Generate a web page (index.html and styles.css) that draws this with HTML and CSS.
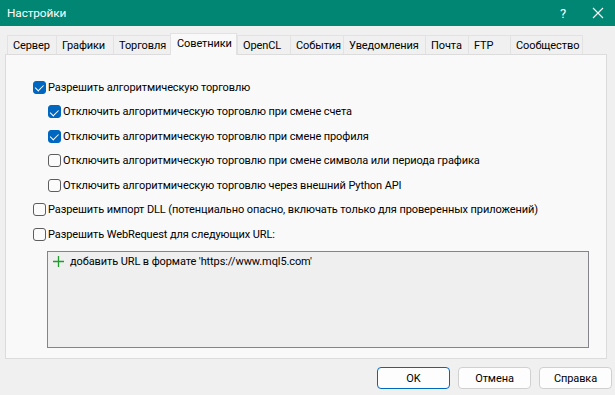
FILE: index.html
```html
<!DOCTYPE html>
<html lang="ru">
<head>
<meta charset="utf-8">
<link rel="stylesheet" href="styles.css">
</head>
<body>
<div class="window">
  <div class="titlebar">
    <span class="title">Настройки</span>
    <span class="help">?</span>
    <svg class="close" width="12" height="12" viewBox="0 0 12 12"><path d="M1 1 L11 11 M11 1 L1 11" stroke="#fff" stroke-width="1.1" fill="none"/></svg>
  </div>
  <div class="tabs">
    <div class="tab w-server">Сервер</div>
    <div class="tab w-charts">Графики</div>
    <div class="tab w-trade">Торговля</div>
    <div class="tab active w-experts">Советники</div>
    <div class="tab w-opencl">OpenCL</div>
    <div class="tab w-events">События</div>
    <div class="tab w-notify">Уведомления</div>
    <div class="tab w-mail">Почта</div>
    <div class="tab w-ftp">FTP</div>
    <div class="tab w-community">Сообщество</div>
  </div>
  <div class="panel">
    <div class="row"><span class="cb checked"></span><span>Разрешить алгоритмическую торговлю</span></div>
    <div class="row sub"><span class="cb checked"></span><span>Отключить алгоритмическую торговлю при смене счета</span></div>
    <div class="row sub"><span class="cb checked"></span><span>Отключить алгоритмическую торговлю при смене профиля</span></div>
    <div class="row sub"><span class="cb"></span><span>Отключить алгоритмическую торговлю при смене символа или периода графика</span></div>
    <div class="row sub"><span class="cb"></span><span>Отключить алгоритмическую торговлю через внешний Python API</span></div>
    <div class="row"><span class="cb"></span><span>Разрешить импорт DLL (потенциально опасно, включать только для проверенных приложений)</span></div>
    <div class="row"><span class="cb"></span><span>Разрешить WebRequest для следующих URL:</span></div>
    <div class="urlbox">
      <div class="urlrow">
        <svg class="plus" width="11" height="11" viewBox="0 0 11 11"><path d="M5.5 0 V11 M0 5.5 H11" stroke="#1f9a2e" stroke-width="1.3" fill="none"/></svg>
        <span>добавить URL в формате 'https://www.mql5.com'</span>
      </div>
    </div>
  </div>
  <div class="buttons">
    <button class="btn primary">OK</button>
    <button class="btn">Отмена</button>
    <button class="btn">Справка</button>
  </div>
</div>
</body>
</html>
```
FILE: styles.css
```css
html, body {
  margin: 0;
  padding: 0;
  background: #f0f0f0;
  font-family: Roboto, "Noto Sans", sans-serif;
  font-size: 11px;
  letter-spacing: -0.1px;
  color: #000;
}
.window {
  width: 615px;
  height: 395px;
  display: flex;
  flex-direction: column;
  overflow: hidden;
}
.titlebar {
  height: 26px;
  background: #008672;
  color: #fff;
  display: flex;
  align-items: center;
  padding-left: 7px;
  font-size: 11.8px;
}
.title { flex: 1; }
.help {
  font-size: 13px;
  margin-right: 26px;
}
.close { margin-right: 11px; }
.tabs {
  display: flex;
  align-items: flex-end;
  margin-top: 7px;
  padding-left: 7px;
  height: 21px;
  position: relative;
  z-index: 1;
}
.tab {
  height: 19px;
  box-sizing: border-box;
  border: 1px solid #e2e2e2;
  border-bottom: none;
  border-right: none;
  background: #f0f0f0;
  display: flex;
  align-items: center;
  padding-left: 5px;
  white-space: nowrap;
  overflow: hidden;
}
.tab.active {
  height: 22px;
  background: #f9f9f9;
  border-right: 1px solid #e2e2e2;
  margin-bottom: -1px;
  padding-left: 6px;
  padding-bottom: 2px;
}
.tab.w-community { border-right: 1px solid #e2e2e2; }
.w-server { width: 49px; }
.w-charts { width: 57px; }
.w-trade { width: 57px; }
.w-experts { width: 67px; }
.w-opencl { width: 53px; }
.w-events { width: 53px; }
.w-notify { width: 82px; }
.w-mail { width: 43px; }
.w-ftp { width: 42px; }
.w-community { width: 73px; }
.panel {
  margin-left: 5px;
  width: 602px;
  height: 305px;
  box-sizing: border-box;
  border: 1px solid #dcdcdc;
  background: #f9f9f9;
  padding: 20px 0 0 27px;
}
.row {
  height: 24.5px;
  display: flex;
  align-items: center;
  gap: 2px;
  white-space: nowrap;
}
.row.sub { padding-left: 15px; }
.cb {
  width: 13px;
  height: 13px;
  box-sizing: border-box;
  border: 1px solid #5d5d5d;
  border-radius: 3px;
  background: #fbfbfb;
  flex: none;
  position: relative;
}
.cb.checked {
  background: #0067c0;
  border-color: #0067c0;
}
.cb.checked::after {
  content: "";
  position: absolute;
  left: 3px;
  top: 1.5px;
  width: 4px;
  height: 6.5px;
  border: solid #fff;
  border-width: 0 1.2px 1.2px 0;
  transform: rotate(45deg);
}
.urlbox {
  margin: 4px 0 0 14px;
  width: 542px;
  height: 97px;
  box-sizing: border-box;
  border: 1px solid #84858b;
  background: #efefef;
}
.urlrow {
  display: flex;
  align-items: center;
  height: 20px;
  padding-left: 5px;
  gap: 6px;
}
.buttons {
  display: flex;
  gap: 8px;
  padding: 8px 0 0 377px;
}
.btn {
  width: 73px;
  height: 22px;
  font-family: inherit;
  font-size: 11px;
  letter-spacing: -0.1px;
  background: #fdfdfd;
  border: 1px solid #d0d0d0;
  border-radius: 4px;
  padding: 0;
  color: #000;
}
.btn.primary {
  border-color: #0067c0;
}
```
